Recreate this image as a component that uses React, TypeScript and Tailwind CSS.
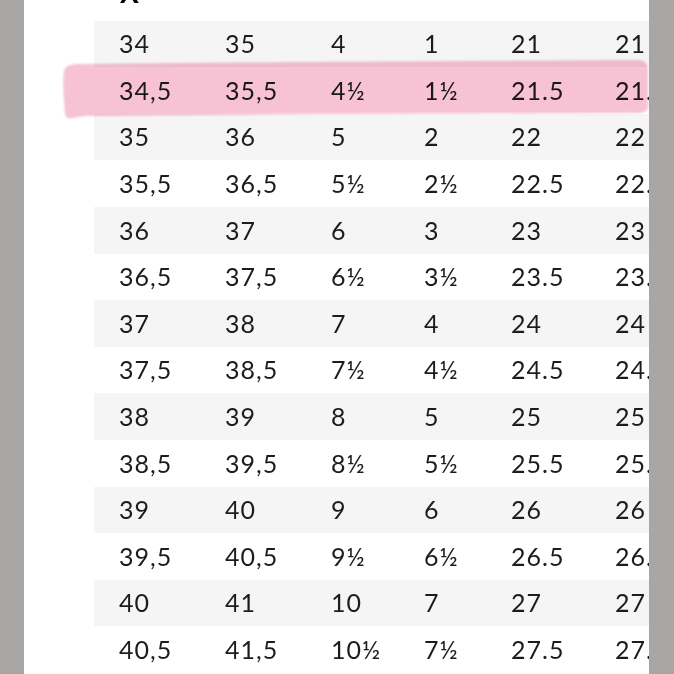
import React from 'react'

const ROWS: string[][] = [
  ['34', '35', '4', '1', '21', '21'],
  ['34,5', '35,5', '4½', '1½', '21.5', '21.5'],
  ['35', '36', '5', '2', '22', '22'],
  ['35,5', '36,5', '5½', '2½', '22.5', '22.5'],
  ['36', '37', '6', '3', '23', '23'],
  ['36,5', '37,5', '6½', '3½', '23.5', '23.5'],
  ['37', '38', '7', '4', '24', '24'],
  ['37,5', '38,5', '7½', '4½', '24.5', '24.5'],
  ['38', '39', '8', '5', '25', '25'],
  ['38,5', '39,5', '8½', '5½', '25.5', '25.5'],
  ['39', '40', '9', '6', '26', '26'],
  ['39,5', '40,5', '9½', '6½', '26.5', '26.5'],
  ['40', '41', '10', '7', '27', '27'],
  ['40,5', '41,5', '10½', '7½', '27.5', '27.5'],
]

const COL_W = ['w-[106px]', 'w-[106px]', 'w-[93px]', 'w-[87px]', 'w-[104px]', 'w-[80px]']

function Highlight() {
  return (
    <svg
      className="pointer-events-none absolute left-0 top-0 mix-blend-multiply"
      width="674"
      height="140"
      viewBox="0 0 674 140"
    >
      <defs>
        <filter id="soft" x="-5%" y="-20%" width="110%" height="140%">
          <feGaussianBlur stdDeviation="1.2" />
        </filter>
      </defs>
      <path
        d="M64 72 C64 66 70 64 80 64 L300 62 L638 60 C645 60 648 64 648 70 L648 106 C648 111 645 113 638 113 L300 114 L90 116 C80 116 74 119 68 118 C64 117 65 110 64 100 C63 90 63 80 64 72 Z"
        fill="#f6c2d4"
        filter="url(#soft)"
      />
    </svg>
  )
}

export default function App() {
  return (
    <div className="relative flex h-[674px] w-[674px] overflow-hidden bg-white font-['Lato','Liberation_Sans',sans-serif] text-[#1c1c1c]">
      <div className="w-[24px] shrink-0 bg-[#a8a7a5]" />
      <div className="relative flex-1 overflow-hidden bg-white">
        <div className="h-[20.7px] overflow-hidden pl-[96px]">
          <div className="-mt-[22px] text-[28px] font-bold leading-[28px] text-black">X</div>
        </div>
        <div className="pl-[70px]">
          {ROWS.map((row, i) => (
            <div
              key={i}
              className={`flex h-[46.6px] items-center pl-[25px] text-[25px] tracking-[0.04em] ${i % 2 === 0 ? 'bg-[#f5f5f5]' : 'bg-white'}`}
            >
              {row.map((cell, j) => (
                <div key={j} className={`${COL_W[j]} shrink-0 whitespace-nowrap`}>
                  {cell}
                </div>
              ))}
            </div>
          ))}
        </div>
      </div>
      <div className="w-[25px] shrink-0 bg-[#a8a7a5]" />
      <Highlight />
    </div>
  )
}
